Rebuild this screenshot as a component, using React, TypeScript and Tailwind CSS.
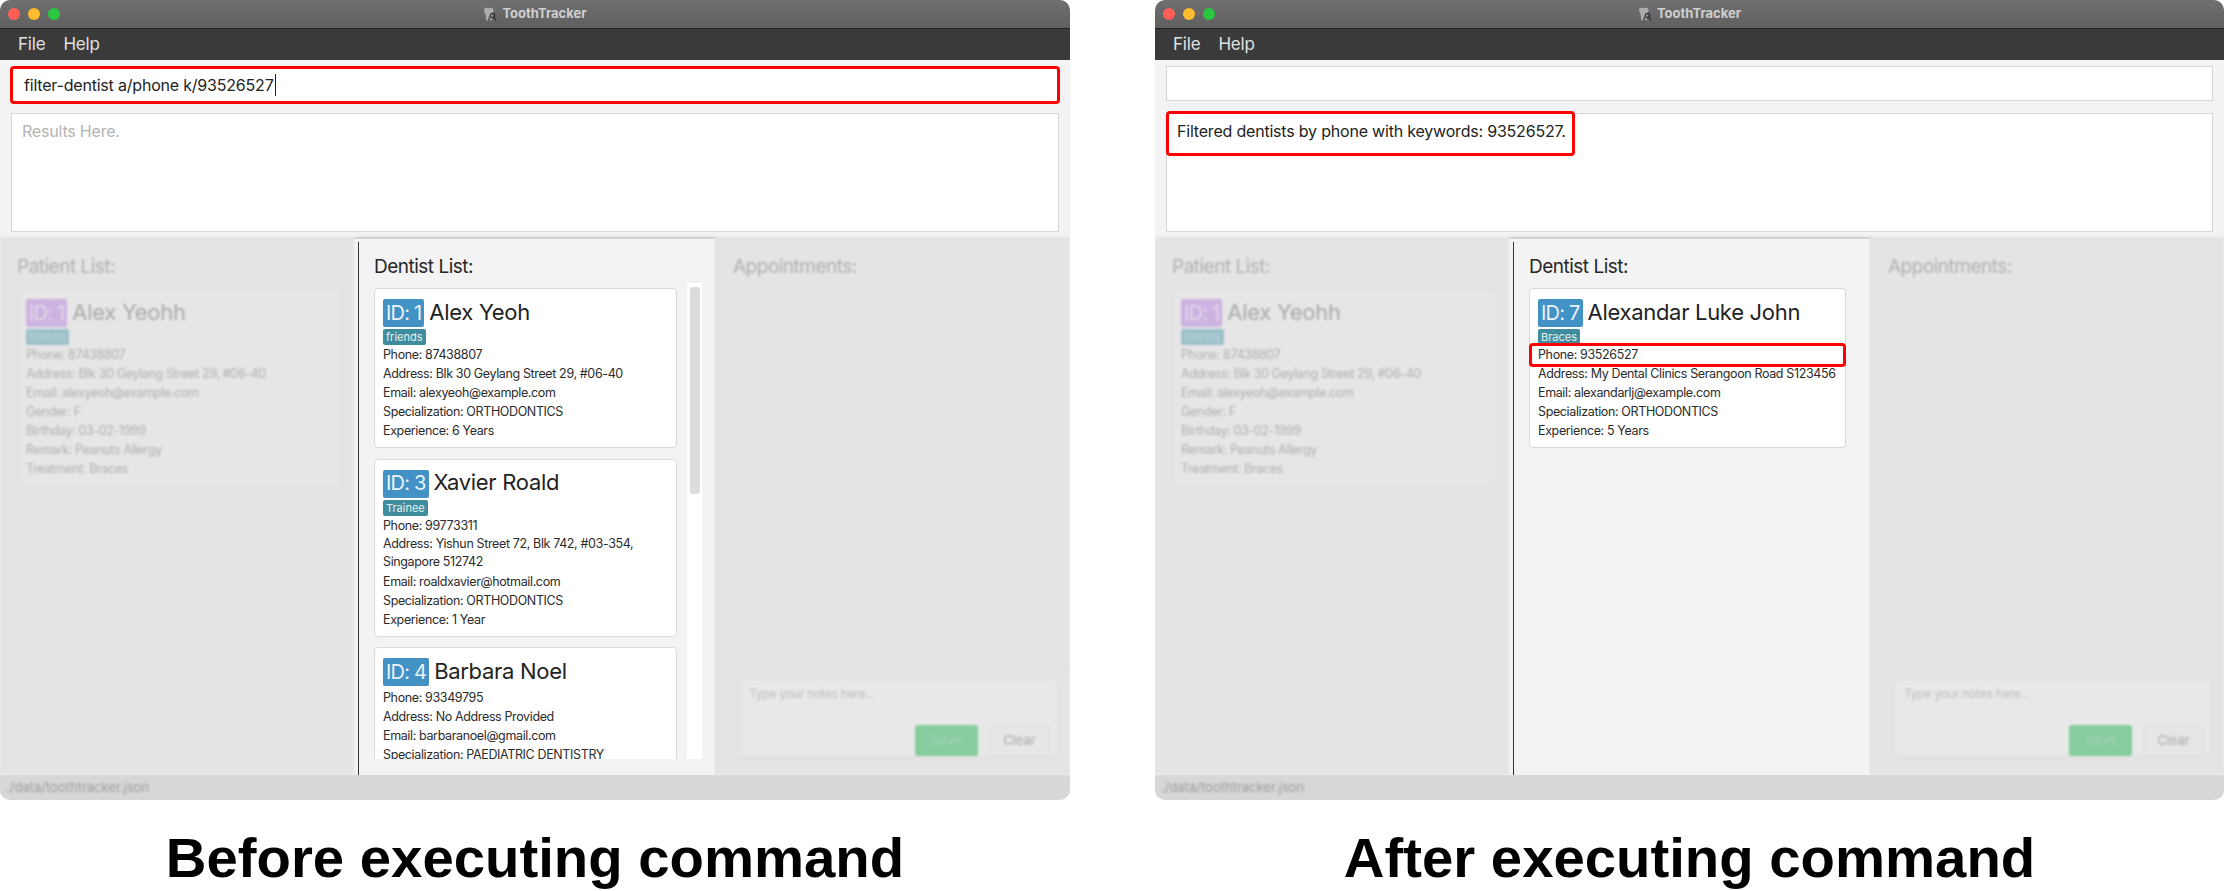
const patient = {
  id: 1,
  name: 'Alex Yeohh',
  tag: 'friends',
  lines: [
    'Phone: 87438807',
    'Address: Blk 30 Geylang Street 29, #06-40',
    'Email: alexyeoh@example.com',
    'Gender: F',
    'Birthday: 03-02-1999',
    'Remark: Peanuts Allergy',
    'Treatment: Braces',
  ],
};

const dentists = [
  {
    id: 1,
    name: 'Alex Yeoh',
    tag: 'friends',
    lines: [
      'Phone: 87438807',
      'Address: Blk 30 Geylang Street 29, #06-40',
      'Email: alexyeoh@example.com',
      'Specialization: ORTHODONTICS',
      'Experience: 6 Years',
    ],
  },
  {
    id: 3,
    name: 'Xavier Roald',
    tag: 'Trainee',
    lines: [
      'Phone: 99773311',
      'Address: Yishun Street 72, Blk 742, #03-354, Singapore 512742',
      'Email: roaldxavier@hotmail.com',
      'Specialization: ORTHODONTICS',
      'Experience: 1 Year',
    ],
  },
  {
    id: 4,
    name: 'Barbara Noel',
    lines: [
      'Phone: 93349795',
      'Address: No Address Provided',
      'Email: barbaranoel@gmail.com',
      'Specialization: PAEDIATRIC DENTISTRY',
    ],
  },
];

const filtered = {
  id: 7,
  name: 'Alexandar Luke John',
  tag: 'Braces',
  lines: [
    'Phone: 93526527',
    'Address: My Dental Clinics Serangoon Road S123456',
    'Email: alexandarlj@example.com',
    'Specialization: ORTHODONTICS',
    'Experience: 5 Years',
  ],
};

function ToothIcon() {
  return (
    <svg width="14" height="15" viewBox="0 0 14 15" className="mr-[5px]">
      <path d="M1 3C1 1 2.500 .5 4 .8c1 .2 1.600.5 2 .5s1-.3 2-.5c1.500-.3 2.500.7 2.500 2.200 0 1.500-.8 2.700-1 4.200-.2 1.600-.3 6.800-1.200 6.800-.9 0-.8-5-2-5s-1 5-2.300 5C2.900 14.500 3 9 2.600 7.500 2.200 6 1 4.700 1 3z" fill="#adadad" />
      <circle cx="9.500" cy="8.500" r="2.200" fill="none" stroke="#2e2e2e" strokeWidth="1.200" />
      <path d="M11 10.500l2 3" stroke="#2e2e2e" strokeWidth="1.300" />
    </svg>
  );
}

function PersonCard({ person, highlight }: { person: any; highlight?: boolean }) {
  return (
    <div className="shrink-0 rounded-[4px] border border-[#d9d9d9] bg-white pt-[10px] pr-[6px] pb-[7px] pl-[8px] text-[12.500px] leading-[19px] tracking-[-0.37px] text-[#2b2b2b]">
      <div className="flex h-[28px] items-center gap-[5px]">
        <span className="flex h-[28px] items-center rounded-[2px] bg-[#4292c6] px-[3px] text-[20px] tracking-[-0.8px] text-[#eaf3f9]">ID: {person.id}</span>
        <span className="pb-[2px] text-[22px] tracking-[-0.3px] text-[#222222]">{person.name}</span>
      </div>
      {person.tag && (
        <div className="mt-[2px] flex h-[16px]">
          <span className="rounded-[2px] bg-[#3f8c9e] px-[3px] text-[11px] leading-[16px] tracking-normal text-[#e4f0f2]">{person.tag}</span>
        </div>
      )}
      <div className={person.tag ? '' : 'mt-[2px]'}>
        {person.lines.map((line: string, i: number) => (
          <div key={line} className={`relative ${line.length > 50 ? 'leading-[18.500px]' : ''}`}>
            {line}
            {highlight && i === 0 && (
              <div className="absolute -top-[2px] -right-[7px] -left-[9px] h-[24px] rounded-[4px] border-[3px] border-[#ff0000]" />
            )}
          </div>
        ))}
      </div>
    </div>
  );
}

function FadedPatient() {
  return (
    <div className="rounded-[4px] border border-[#dedede] bg-[#e6e6e6] pt-[10px] pr-[6px] pb-[9px] pl-[7px] text-[12.500px] leading-[19px] tracking-[-0.37px] text-[#b0b0b0]">
      <div className="flex h-[28px] items-center gap-[5px]">
        <span className="flex h-[28px] items-center rounded-[2px] bg-[#cdb4e0] px-[3px] text-[20px] tracking-[-0.8px] text-[#e3d8ec]">ID: {patient.id}</span>
        <span className="pb-[2px] text-[22px] tracking-[-0.3px] text-[#a9a9a9]">{patient.name}</span>
      </div>
      <div className="mt-[2px] flex h-[16px]">
        <span className="rounded-[2px] bg-[#9cc0ca] px-[3px] text-[11px] leading-[16px] tracking-normal text-[#bcd5dc]">{patient.tag}</span>
      </div>
      {patient.lines.map(line => (
        <div key={line}>{line}</div>
      ))}
    </div>
  );
}

function AppWindow({ after }: { after?: boolean }) {
  return (
    <div className="flex h-[800px] flex-col overflow-hidden rounded-t-[10px] rounded-b-[10px] bg-[#f3f3f3]">
      {/* Title bar */}
      <div className="relative flex h-[29px] shrink-0 items-center justify-center border-b border-[#1f1f1f] bg-gradient-to-b from-[#707070] to-[#5f5f5f]">
        <div className="absolute top-[8px] left-[8px] flex gap-[8px]">
          <div className="h-[12px] w-[12px] rounded-full bg-[#ff5f57]" />
          <div className="h-[12px] w-[12px] rounded-full bg-[#febc2e]" />
          <div className="h-[12px] w-[12px] rounded-full bg-[#28c840]" />
        </div>
        <ToothIcon />
        <span className="text-[13px] font-bold text-[#cfcfcf]">ToothTracker</span>
      </div>

      {/* Menu */}
      <div className="flex h-[31px] shrink-0 items-center gap-[18px] bg-[#3a3a3a] pl-[18px] text-[17px] tracking-[-0.2px] text-[#e0e0e0]">
        <span>File</span>
        <span>Help</span>
      </div>

      {/* Command box */}
      <div className="shrink-0 px-[10px] pt-[6px]">
        {after ? (
          <div className="mx-[1px] h-[35px] border border-[#d6d6d6] bg-white" />
        ) : (
          <div className="flex h-[38px] items-center rounded-[4px] border-[3px] border-[#ff0000] bg-white pl-[11px] text-[16px] tracking-[-0.2px] text-[#222222]">
            filter-dentist a/phone k/93526527
            <span className="ml-[1px] h-[22px] w-px bg-[#222222]" />
          </div>
        )}
      </div>

      {/* Result box */}
      <div className={`shrink-0 px-[11px] ${after ? 'pt-[12px]' : 'pt-[9px]'}`}>
        <div className="relative h-[119px] border border-[#d6d6d6] bg-white pt-[7px] pl-[10px] text-[16px] leading-[20px] tracking-[-0.2px]">
          {after ? (
            <>
              <span className="text-[#222222]">Filtered dentists by phone with keywords: 93526527.</span>
              <div className="absolute -top-[3px] -left-px h-[45px] w-[409px] rounded-[4px] border-[3px] border-[#ff0000]" />
            </>
          ) : (
            <span className="text-[#b3b3b3]">Results Here.</span>
          )}
        </div>
      </div>

      {/* Panels */}
      <div className="mt-[5px] flex min-h-0 flex-1">
        {/* Patients, dimmed */}
        <div className="w-[354px] shrink-0 bg-[#e4e4e4] pr-[11px] pl-[18px] blur-[1px]">
          <div className="-ml-px flex h-[46px] items-center pt-[15px] text-[19px] tracking-[-0.5px] text-[#b0b0b0]">Patient List:</div>
          <div className="mt-[5px]">
            <FadedPatient />
          </div>
        </div>

        {/* Dentists */}
        <div className="flex w-[361px] shrink-0 flex-col border-t-2 border-[#d4d4d4] bg-[#f3f3f3] pt-[3px] pl-[4px] shadow-[2px_0_3px_rgba(0,0,0,0.12)]">
          <div className="flex min-h-0 flex-1 flex-col border-l border-[#333333] pl-[15px]">
            <div className="flex h-[41px] shrink-0 items-center pt-[9px] text-[19px] tracking-[-0.5px] text-[#262626]">Dentist List:</div>
            <div className="mb-[16px] flex min-h-0 flex-1">
              <div className={`flex min-h-0 min-w-0 flex-1 flex-col gap-[10.500px] overflow-hidden pt-[5px] ${after ? 'pr-[24px]' : 'pr-[10px]'}`}>
                {after ? (
                  <PersonCard person={filtered} highlight />
                ) : (
                  dentists.map(d => <PersonCard key={d.id} person={d} />)
                )}
              </div>
              {!after && (
                <div className="mr-[13px] h-full w-[15px] shrink-0 bg-white pt-[4px] pl-[3px]">
                  <div className="h-[207px] w-[10px] rounded-[3px] bg-[#dcdcdc]" />
                </div>
              )}
            </div>
          </div>
        </div>

        {/* Appointments, dimmed */}
        <div className="flex min-w-0 flex-1 flex-col bg-[#e4e4e4] blur-[1px]">
          <div className="flex h-[46px] items-center pt-[15px] pl-[18px] text-[19px] tracking-[-0.5px] text-[#b0b0b0]">Appointments:</div>
          <div className="flex-1 border-b border-[#dddddd]" />
          <div className="shrink-0 pt-[9px] pr-[12px] pb-[18px] pl-[24px]">
            <div className="flex h-[78px] flex-col justify-between rounded-[4px] border border-[#dcdcdc] bg-[#e8e8e8] pl-[9px]">
              <div className="pt-[5px] text-[12px] tracking-[-0.2px] text-[#bdbdbd]">Type your notes here...</div>
              <div className="flex justify-end gap-[11px] pr-[7px]">
                <div className="flex h-[31px] w-[63px] items-center justify-center rounded-[3px] bg-[#85cc9e] text-[13px] text-[#a9d4b8]">Save</div>
                <div className="flex h-[31px] w-[61px] items-center justify-center rounded-[3px] border border-[#dedede] bg-[#e6e6e6] text-[13px] text-[#aaaaaa]">Clear</div>
              </div>
            </div>
          </div>
        </div>
      </div>

      {/* Status bar */}
      <div className="flex h-[25px] shrink-0 items-center bg-[#d7d7d7] pl-[6px] text-[13px] text-[#9c9c9c]">
        <span className="blur-[1px]">./data/toothtracker.json</span>
      </div>
    </div>
  );
}

export default function App() {
  return (
    <div className="flex h-[891px] w-[2224px] gap-[85px] overflow-hidden bg-white font-[Inter,sans-serif]">
      <div className="w-[1070px] shrink-0">
        <AppWindow />
        <div className="flex h-[91px] items-center justify-center pt-[25px] font-['Liberation_Sans',sans-serif] text-[56.300px] font-bold text-black">
          Before executing command
        </div>
      </div>
      <div className="w-[1069px] shrink-0">
        <AppWindow after />
        <div className="flex h-[91px] items-center justify-center pt-[25px] font-['Liberation_Sans',sans-serif] text-[56.300px] font-bold text-black">
          After executing command
        </div>
      </div>
    </div>
  );
}
